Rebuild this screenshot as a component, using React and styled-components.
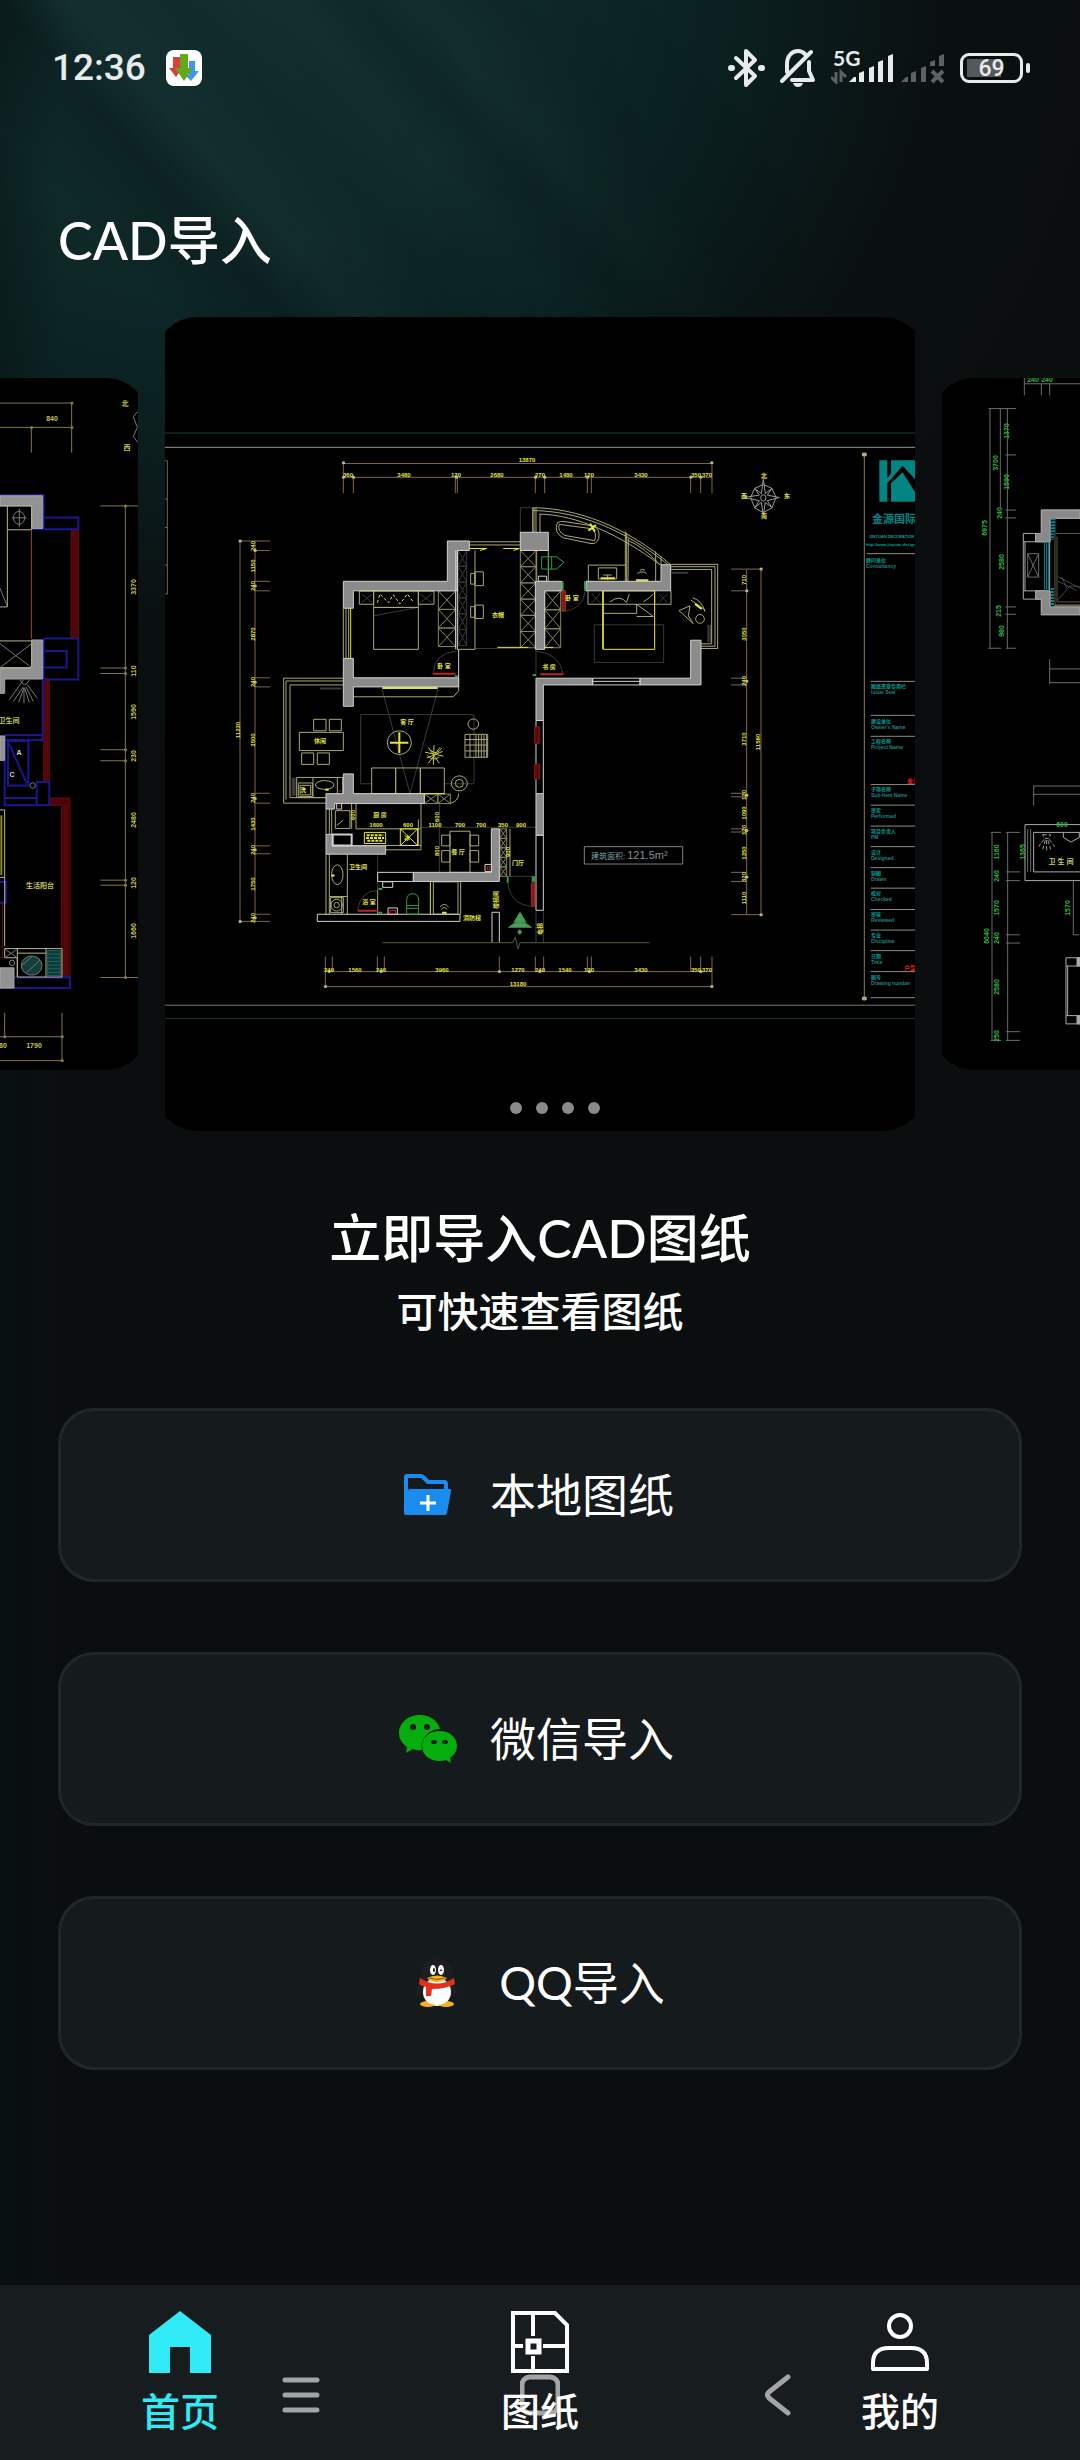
import React from "react";
import styled, { createGlobalStyle } from "styled-components";

const GlobalStyle = createGlobalStyle`
  *, *::before, *::after { box-sizing: border-box; }
  body {
    margin: 0;
    background: #0a0e0f;
    color: #fff;
    font-family: Lato, "Noto Sans CJK SC", sans-serif;
  }
`;

const Page = styled.div`
  position: relative;
  min-height: 100vh;
  display: flex;
  flex-direction: column;
  overflow: hidden;
  background:
    linear-gradient(90deg, rgba(6, 18, 18, 0.4) 0, rgba(6, 18, 18, 0) 60px),
    radial-gradient(ellipse 900px 820px at 220px -40px, #122e2f 0%, #0f2929 35%, #0b2121 55%, rgba(10, 16, 17, 0.6) 82%, rgba(10, 14, 15, 0) 100%),
    #0a0e0f;

  &::before {
    content: "";
    position: absolute;
    inset: 0 0 auto 0;
    height: 800px;
    background: linear-gradient(
      48deg,
      rgba(0, 0, 0, 0) 34%,
      rgba(0, 0, 0, 0.18) 40%,
      rgba(60, 90, 80, 0.08) 44%,
      rgba(0, 0, 0, 0.04) 50%,
      rgba(60, 100, 90, 0.05) 56%,
      rgba(0, 0, 0, 0.09) 60%,
      rgba(60, 90, 80, 0.07) 63%,
      rgba(0, 0, 0, 0.07) 68%,
      rgba(0, 0, 0, 0) 76%
    );
    mask-image: radial-gradient(ellipse 720px 640px at 160px 0, #000 40%, transparent 100%);
  }
`;

const StatusBar = styled.div`
  position: relative;
  display: flex;
  align-items: center;
  justify-content: space-between;
  height: 136px;
  padding: 0 50px 0 52px;
  color: #e8ebeb;
  font-family: Roboto, sans-serif;
`;

const StatusGroup = styled.div`
  display: flex;
  align-items: center;
  gap: ${(p) => p.$gap}px;
`;

const Clock = styled.time`
  font-size: 37px;
  font-weight: 500;
  line-height: 40px;
`;

const Signal = styled.div`
  position: relative;
  display: flex;
  align-items: center;
  gap: 8px;
`;

const NetworkType = styled.span`
  position: absolute;
  left: 2px;
  top: -4px;
  font: 700 21px/20px Lato, sans-serif;
`;

const BatteryShell = styled.div`
  display: flex;
  align-items: center;
  gap: 3px;

  &::after {
    content: "";
    width: 4px;
    height: 10px;
    border-radius: 2px;
    background: #e8ebeb;
  }
`;

const BatteryBody = styled.div`
  width: 63px;
  height: 30px;
  border: 3px solid #e8ebeb;
  border-radius: 9px;
  background: linear-gradient(#55595a, #55595a) 4px center / 34px 18px no-repeat;
  font: 500 23px/25px Roboto, sans-serif;
  text-align: center;
`;

const Header = styled.header`
  position: relative;
  padding: 72px 58px 45px;
`;

const Title = styled.h1`
  margin: 0;
  font-size: 52px;
  font-weight: 500;
  line-height: 64px;
`;

const Carousel = styled.section`
  position: relative;
  display: flex;
  align-items: center;
  justify-content: center;
  gap: 27px;
  overflow: hidden;
`;

const Slide = styled.div`
  position: relative;
  flex: 0 0 ${(p) => (p.$active ? 750 : 638)}px;
  overflow: hidden;
`;

const Sheet = styled.div`
  display: flex;
  justify-content: ${(p) => p.$align || "center"};
  margin: 0 -10px;
  padding: 0 10px;
  border-radius: 42px;
  background: #000;
  overflow: hidden;

  svg { display: block; }
`;

const Dots = styled.div`
  position: absolute;
  inset: auto 0 17px 30px;
  display: flex;
  justify-content: center;
  gap: 14px;
`;

const Dot = styled.span`
  width: 12px;
  height: 12px;
  border-radius: 50%;
  background: #8a8a8a;
`;

const Intro = styled.section`
  position: relative;
  padding: 77px 58px 68px;
  text-align: center;
`;

const IntroTitle = styled.h2`
  margin: 0 0 16px;
  font-size: 52px;
  font-weight: 500;
  line-height: 60px;
`;

const IntroText = styled.p`
  margin: 0;
  font-size: 41px;
  font-weight: 500;
  line-height: 56px;
`;

const Actions = styled.div`
  position: relative;
  display: flex;
  flex-direction: column;
  gap: 70px;
  padding: 0 58px 70px;
`;

const ActionButton = styled.button`
  display: flex;
  align-items: center;
  justify-content: center;
  gap: 40px;
  height: 174px;
  padding: 0;
  border: 3px solid #20272a;
  border-radius: 36px;
  background: #151a1d;
  color: #fff;
  font: 400 46px/60px Lato, "Noto Sans CJK SC", sans-serif;
`;

const ActionIcon = styled.span`
  display: flex;
  align-items: center;
  justify-content: center;
  width: 44px;
  height: 58px;

  svg { flex: none; display: block; }
`;

const BottomArea = styled.footer`
  position: relative;
  margin-top: auto;
`;

const TabBar = styled.nav`
  display: flex;
  background: #171c1f;
`;

const Tab = styled.a`
  flex: 1;
  display: flex;
  flex-direction: column;
  align-items: center;
  gap: 14px;
  padding: 26px 0 25px;
  color: ${(p) => (p.$active ? "#30eaf6" : "#fff")};
  font-size: 39px;
  font-weight: 500;
  line-height: 48px;
  text-decoration: none;

  svg { display: block; }
`;

const SystemBar = styled.div`
  position: absolute;
  inset: auto 0 0 0;
  display: flex;
  justify-content: center;
  gap: 199px;
  height: 86px;
  pointer-events: none;
`;

const SystemButton = styled.button`
  width: 40px;
  height: 42px;
  padding: 0;
  border: 0;
  background: none;
  color: rgba(255, 255, 255, 0.6);

  svg { display: block; }
`;

/* ---------- status icons ---------- */

const BluetoothIcon = () => (
  <svg width="37" height="40" viewBox="0 0 37 40" fill="none" stroke="#e8ebeb" strokeWidth="4" strokeLinejoin="round" strokeLinecap="round">
    <path d="M8 10L27 28L18 37V3L27 12L8 30" />
    <path d="M3 20h1M33 20h1" strokeWidth="6" />
  </svg>
);

const MutedBellIcon = () => (
  <svg width="36" height="40" viewBox="0 0 36 40" fill="none" stroke="#e8ebeb" strokeWidth="4" strokeLinecap="round" strokeLinejoin="round">
    <path d="M2 33L31 4" />
    <path d="M7 24V16C7 8 12 3 18 3C21 3 23 4 25 6" />
    <path d="M29 14V23L33 32H12" />
    <path d="M13 35H23C22 38 20 39 18 39S14 38 13 35Z" fill="#e8ebeb" stroke="none" />
  </svg>
);

const SignalIcon = () => (
  <svg width="62" height="32" viewBox="0 0 62 32">
    <g fill="#e8ebeb">
      <path d="M18 30L23 25H25V30Z" />
      <path d="M28 21L33 19V30H28Z M38 16L43 14V30H38Z M47 10L52 8V30H47Z M57 4L62 2V30H57Z" />
    </g>
    <path d="M5 20V30L0 25M10 30V20L15 25" fill="none" stroke="#5c6162" strokeWidth="3" />
  </svg>
);

const NoSimIcon = () => (
  <svg width="44" height="32" viewBox="0 0 44 32">
    <path d="M0 30L5 25H7V30Z M10 21L15 19V30H10Z M20 16L25 14V30H20Z M29 10L34 8V14H29Z M38 4L43 2V14H38Z" fill="#5c6162" />
    <path d="M31 19L42 30M42 19L31 30" stroke="#5c6162" strokeWidth="4" />
  </svg>
);

const DownloadAppIcon = () => (
  <svg width="36" height="36" viewBox="0 0 36 36">
    <rect width="36" height="36" rx="8" fill="#fff" />
    <path d="M7 7h7v10h3l-7 10l-7-9h4Z" fill="#d9403c" />
    <path d="M23 11h6v10h4l-8 10l-6-6h4Z" fill="#3a98ee" />
    <path d="M14 4h8v14h5l-9 13l-9-13h5Z" fill="#63a71a" />
  </svg>
);

/* ---------- action icons ---------- */

const FolderIcon = () => (
  <svg width="48" height="42" viewBox="0 0 48 42">
    <path d="M2 39V3Q2 2 3 2H17Q18 2 19 3L24 8H40Q42 8 42 10V16" fill="none" stroke="#1a8cf0" strokeWidth="4" strokeLinejoin="round" />
    <path d="M6 15H46Q48 15 47 17L43 39Q43 41 41 41H2Q0 41 0 39L4 17Q4 15 6 15Z" fill="#1a8cf0" />
    <path d="M16 29H32M24 21V37" stroke="#fff" strokeWidth="3" />
  </svg>
);

const WechatIcon = () => (
  <svg width="58" height="48" viewBox="0 0 58 48">
    <path d="M21 0C9 0 0 8 0 18C0 24 3 28 8 32L7 38L14 34Q18 36 23 35C21 25 29 14 41 14C39 6 31 0 21 0Z" fill="#06ad0c" />
    <path d="M41 16C31 16 23 22 23 31S31 46 41 46Q44 46 47 45L52 48L51 43C55 40 58 36 58 31C58 22 50 16 41 16Z" fill="#06ad0c" />
    <g fill="#151a1d">
      <ellipse cx="14" cy="12" rx="3" ry="3" />
      <ellipse cx="28" cy="12" rx="3" ry="3" />
      <ellipse cx="35" cy="27" rx="3" ry="2" />
      <ellipse cx="46" cy="27" rx="3" ry="2" />
    </g>
  </svg>
);

const QQIcon = () => (
  <svg width="42" height="50" viewBox="0 0 42 50">
    <path d="M21 1C11 1 5 7 5 16V21C2 27 0 33 1 38Q3 40 5 34L8 41H34L37 34Q39 40 41 38C42 33 40 27 37 21V16C37 7 31 1 21 1Z" fill="#1d1e20" />
    <ellipse cx="21" cy="34" rx="14" ry="14" fill="#fff" />
    <ellipse cx="12" cy="46" rx="8" ry="3" fill="#f8b31c" />
    <ellipse cx="30" cy="46" rx="8" ry="3" fill="#f8b31c" />
    <ellipse cx="21" cy="41" rx="11" ry="6" fill="#fff" />
    <path d="M4 20Q21 31 38 20L39 26Q30 31 16 31L15 38H10V29Q5 28 3 26Z" fill="#e3301c" />
    <ellipse cx="17" cy="12" rx="3" ry="5" fill="#fff" />
    <ellipse cx="25" cy="12" rx="3" ry="5" fill="#fff" />
    <ellipse cx="18" cy="12" rx="1" ry="2" fill="#111" />
    <path d="M24 13Q25 10 26 13" fill="none" stroke="#111" />
    <path d="M11 20Q21 15 31 20Q27 24 21 24T11 20Z" fill="#f8b31c" />
    <path d="M13 20Q21 23 29 20" fill="none" stroke="#8a4a10" strokeWidth="1" />
  </svg>
);

/* ---------- tab icons ---------- */

const HomeIcon = () => (
  <svg width="62" height="62" viewBox="0 0 62 62">
    <path d="M31 0L62 24V62H41V36H21V62H0V24Z" fill="currentColor" />
  </svg>
);

const DrawingIcon = () => (
  <svg width="62" height="62" viewBox="0 0 62 62" fill="none" stroke="currentColor" strokeWidth="4">
    <path d="M4 2H46L58 14V60H4Z" />
    <path d="M24 2V25M24 45V60M4 35H14M34 35H58" />
    <rect x="19" y="30" width="11" height="11" strokeWidth="5" />
  </svg>
);

const ProfileIcon = () => (
  <svg width="62" height="62" viewBox="0 0 62 62" fill="none" stroke="currentColor" strokeWidth="4">
    <circle cx="31" cy="15" r="11" />
    <path d="M4 58V52Q4 37 20 37H42Q58 37 58 52V58Z" strokeLinejoin="round" />
  </svg>
);

/* ---------- CAD drawings ---------- */

const CadGroup = styled.g`
  fill: none;
  stroke: ${(p) => p.$c};
  stroke-width: ${(p) => p.$w || 1}px;

  * { vector-effect: non-scaling-stroke; }
`;

const CadText = styled.text`
  font-family: "Liberation Sans", "Noto Sans CJK SC", sans-serif;
  font-size: ${(p) => p.$s || 6}px;
  font-weight: ${(p) => (p.$light ? 400 : 700)};
  fill: ${(p) => p.$c || "#e4e43c"};
  text-anchor: ${(p) => p.$a || "middle"};
`;

const Labels = ({ items, x0, y0, sy, color, size, anchor }) =>
  items.map(([x, y, text, turned], i) => {
    const px = Math.round(x0 + x / 3);
    const py = Math.round(y0 + y * sy);
    return (
      <CadText
        key={i}
        $c={color}
        $s={size}
        $a={anchor}
        x={px}
        y={py + 2}
        transform={turned ? `rotate(-90 ${px} ${py})` : undefined}
      >
        {text}
      </CadText>
    );
  });

const cross = (x, y, w, h) => `M${x} ${y}h${w}v${h}h${-w}ZM${x} ${y}l${w} ${h}M${x + w} ${y}l${-w} ${h}`;
const stack = (x, y, w, h, n) => Array.from({ length: n }, (_, i) => cross(x, y + i * h, w, h)).join("");
const box = (x, y, w, h) => `M${x} ${y}h${w}v${h}h${-w}Z`;
const vTicks = (xs, y1, y2) => xs.map((x) => `M${x} ${y1}V${y2}`).join("");
const hTicks = (ys, x1, x2) => ys.map((y) => `M${x1} ${y}H${x2}`).join("");

const planLabels = [
  [1102, 102, "13870"], [565, 140, "360"], [732, 140, "3480"], [889, 140, "120"], [1010, 140, "2680"],
  [1140, 140, "270"], [1218, 140, "1480"], [1288, 140, "120"], [1442, 140, "3430"], [1608, 140, "350"], [1641, 140, "370"],
  [506, 1390, "240"], [586, 1390, "1560"], [663, 1390, "240"], [846, 1390, "3960"], [1073, 1390, "1270"],
  [1140, 1390, "240"], [1216, 1390, "1540"], [1288, 1390, "120"], [1442, 1390, "3430"], [1608, 1390, "350"], [1641, 1390, "370"],
  [1075, 1427, "13180"],
  [278, 318, "240", 1], [278, 368, "1150", 1], [278, 420, "240", 1], [278, 542, "2870", 1], [278, 663, "240", 1],
  [278, 809, "3500", 1], [278, 957, "240", 1], [278, 1022, "1430", 1], [278, 1088, "240", 1], [278, 1174, "1750", 1], [278, 1259, "240", 1],
  [235, 785, "11230", 1],
  [1751, 405, "710", 1], [1751, 542, "3050", 1], [1751, 661, "240", 1], [1751, 808, "3710", 1], [1751, 949, "120", 1],
  [1751, 994, "1090", 1], [1751, 1038, "120", 1], [1751, 1094, "1350", 1], [1751, 1156, "320", 1], [1751, 1210, "1110", 1],
  [1793, 815, "11580", 1],
  [1015, 492, "衣帽"], [852, 622, "卧 室"], [742, 763, "客 厅"], [480, 813, "休闲"], [660, 1000, "厨 房"],
  [648, 1023, "1600"], [745, 1023, "600"], [825, 1023, "1100"], [900, 1023, "700"], [964, 1023, "700"], [1028, 1023, "350"], [1083, 1023, "900"],
  [895, 1092, "餐 厅"], [594, 1130, "卫生间"], [627, 1220, "浴 室"], [1075, 1120, "门厅"],
  [935, 1259, "消防梯"], [1235, 450, "卧 室"], [1166, 624, "书 房"], [1008, 1215, "楼梯间", 1], [1139, 1287, "电梯", 1],
  [832, 1090, "800", 1], [1043, 1092, "900", 1], [832, 1005, "600", 1], [580, 1000, "600", 1],
  [1813, 141, "北"], [1751, 193, "西"], [1880, 193, "东"], [1812, 244, "南"], [429, 936, "洗"], [742, 1056, "冰"],
];

const titleRows = [
  [673, "图纸签章专用栏", "Issue Seal"], [761, "建设单位", "Owner's Name"], [813, "工程名称", "Project Name"],
  [934, "子项名称", "Sub-Item Name"], [986, "审定", "Performed"], [1039, "项目负责人", "PM"], [1092, "设计", "Designed"],
  [1145, "制图", "Drawn"], [1197, "校对", "Checked"], [1250, "审核", "Reviewed"], [1303, "专业", "Discipline"],
  [1355, "日期", "Time"], [1408, "图号", "Drawing number"],
];

const FloorPlan = () => (
  <svg width="750" height="814" viewBox="165 317 750 814" role="img" aria-label="CAD floor plan">
    <g transform="translate(160 420) scale(0.33333 0.39541)">
      <CadGroup $c="#1d3a34"><path d="M15 33H2265M15 1514H2265" /></CadGroup>
      <CadGroup $c="#9a9a94"><path d="M15 69H2265" /></CadGroup>
      <CadGroup $c="#77776f"><path d="M15 1480H2265" /></CadGroup>
      <CadGroup $c="#6f6c5a"><path d="M22 103V440H15M15 103h7M15 200h7M15 272h7M15 367h7" /></CadGroup>
      <CadGroup $c="#80664c">
        <path d={"M550 110H1656M550 145H1656M550 105V185M1656 105V185" + vTicks([580, 886, 892, 1126, 1154, 1282, 1294, 1592, 1622], 140, 185)} />
        <path d={"M240 306V1268M285 306V1268" + hTicks([306, 1268], 240, 330) + hTicks([330, 408, 432, 652, 675, 944, 969, 1077, 1097, 1250], 285, 330)} />
        <path d={"M1760 377V1251M1803 377V1251" + hTicks([377, 1251], 1713, 1803) + hTicks([432, 653, 670, 944, 953, 1034, 1042, 1144, 1167], 1713, 1760)} />
        <path d={"M496 1395H1656M496 1433H1656M496 1357V1433M1656 1357V1433" + vTicks([517, 652, 673, 1018, 1126, 1151, 1282, 1294, 1592, 1622], 1357, 1395)} />
      </CadGroup>
      <CadGroup $c="#b8b48c" $w={3} strokeLinecap="round">
        <path d="M550 108h1M1655 108h1M240 306h1M240 1268h1M1803 377h1M1803 1251h1M496 1433h1M1655 1433h1M550 145h1M580 145h1M889 145h1M1126 145h1M1154 145h1M1282 145h1M1592 145h1M1622 145h1M285 330h1M285 420h1M285 663h1M285 957h1M285 1087h1M285 1259h1M1760 432h1M1760 661h1M1760 949h1M1760 1038h1M1760 1156h1M507 1395h1M663 1395h1M1018 1395h1M1139 1395h1M1288 1395h1M1622 1395h1" />
      </CadGroup>

      {/* faint furniture guides */}
      <CadGroup $c="#3a3a3a">
        <path d="M666 680L750 945L834 680M942 745H602V920H635M942 745V920H853" />
        <path d="M1303 518h208v95h-208ZM783 1030H1128M838 970V1144M653 1098V1190M1038 1154H1122M1081 330V222H1118M1128 580V650M1128 1240V1322M1150 1240V1322M945 578H1081" />
        <path d={stack(895, 330, 25, 40, 6)} />
        <path d="M820 640Q822 590 887 585M1210 645Q1200 590 1130 585M1206 485Q1270 480 1276 432M593 1240Q600 1190 655 1190M1043 1160Q1045 1225 1115 1230" />
        <path d="M643 495L775 474M605 440L637 462M637 440L605 462M780 440L816 462M816 440L780 462M1295 440L1320 462M1320 440L1295 462M1497 440L1522 462M1522 440L1497 462" />
        <path d="M398 905V950M404 905V950M480 679H545M1535 386H1585M1645 518V562M1652 518V562" strokeWidth="2" />
      </CadGroup>

      {/* joinery and glazing */}
      <CadGroup $c="#a9a972">
        <path d="M550 653H371V969H498M550 670H390V955H498M378 660V960M550 660H378" />
        <path d="M550 476V603M558 476V603M566 476V603M498 984V1048M508 984V1048M515 984V1048" />
        <path d="M928 308H1081M928 316H1081M945 330V580M892 580H945M1118 222V284M1128 222V284M1140 236V284" />
        <path d="M1118 222C1250 222 1400 270 1532 366M1118 229C1250 230 1390 274 1524 366M1140 238C1250 240 1380 290 1500 366M1122 222V284" />
        <path d="M1532 365H1673V578H1623M1532 378H1655V566H1623M1532 371H1665V572H1623" />
        <path d={box(641, 474, 134, 106) + box(641, 432, 134, 42) + box(598, 432, 43, 34) + box(775, 432, 47, 34)} />
        <path d={box(945, 384, 25, 35) + box(945, 468, 25, 34) + box(932, 388, 13, 27) + box(932, 472, 13, 27)} />
        <path d={box(418, 790, 132, 46) + box(461, 757, 37, 29) + box(508, 757, 36, 29) + box(425, 842, 36, 29) + box(472, 842, 36, 29)} />
        <path d={box(410, 904, 138, 51) + box(415, 918, 42, 34) + box(420, 924, 32, 24) + "M459 904V955M532 904V955"} />
        <ellipse cx="494" cy="923" rx="28" ry="11" />
        <ellipse cx="718" cy="816" rx="36" ry="30" />
        <ellipse cx="940" cy="769" rx="16" ry="13" />
        <ellipse cx="898" cy="919" rx="24" ry="19" />
        <ellipse cx="898" cy="919" rx="12" ry="10" />
        <path d={box(915, 795, 68, 58) + vTicks([930, 948, 956, 964, 972, 980], 795, 853) + hTicks([808, 822, 837], 915, 983)} />
        <path d={box(635, 880, 72, 65) + box(707, 880, 74, 65) + box(781, 880, 72, 65)} />
        <path d="M580 700H880L896 685V652M870 970Q895 965 896 945" />
        <path d={box(526, 988, 44, 45) + "M530 1025L550 1012M575 970V1034M588 970V1034H780M580 1076H783M783 970V1087H677M775 1010V1076"} />
        <path d={box(870, 1040, 60, 104) + box(845, 1050, 25, 27) + box(845, 1089, 25, 29) + box(930, 1050, 26, 27) + box(930, 1089, 26, 29)} />
        <path d={"M498 1098V1250M508 1098V1250M562 1098V1250M508 1205H562" + box(512, 1208, 38, 38)} />
        <ellipse cx="532" cy="1150" rx="17" ry="25" />
        <ellipse cx="530" cy="1227" rx="17" ry="15" />
        <ellipse cx="530" cy="1227" rx="8" ry="7" />
        <path d={box(820, 1168, 74, 82) + "M902 1168V1250M840 1232Q853 1218 866 1232M844 1238Q853 1228 862 1238M653 1190V1250M545 1205V1250M1050 1034V1154"} />
        <path d="M1192 260Q1200 255 1215 257L1300 268Q1322 275 1316 300Q1310 315 1290 312L1210 298Q1180 285 1192 260ZM1198 264L1296 275Q1312 285 1304 305L1215 292Q1190 280 1198 264Z" />
        <path d="M1285 408V367H1396M1400 285V408M1396 282V408M1405 300L1404 408M1405 305Q1450 320 1500 366M1487 332V408M1503 345V366" />
        <path d={box(1315, 374, 55, 28) + "M1330 392H1355M1343 392V405M1165 330V408M1130 330V408"} />
        <path d="M1557 482L1590 470L1585 495L1600 515ZM1592 455L1635 480M1598 450Q1625 455 1635 485M1440 380Q1447 375 1455 380M1432 388Q1446 380 1460 388M1284 432V466H1330M1484 432V466H1533V432" />
        <ellipse cx="1620" cy="503" rx="13" ry="11" />
        <path d="M1330 466H1484M1330 489H1430V466L1480 497H1430M1400 460L1408 440M1350 460Q1380 440 1400 462M1450 460Q1470 450 1480 440" />
      </CadGroup>
      <CadGroup $c="#85855c">
        <path d={stack(1081, 330, 47, 41, 6) + stack(835, 432, 52, 47, 3) + stack(1154, 432, 48, 48, 3) + stack(1020, 1034, 20, 24, 5) + cross(793, 946, 40, 24) + cross(834, 946, 37, 24)} />
      </CadGroup>

      {/* bright details */}
      <CadGroup $c="#e6e62e">
        <path d="M572 476V603M598 432H822M666 678H834M930 325H980L960 330M1030 325H1078L1060 330M1012 575H1105M1126 575H1180M811 1168V1250M635 945H853" />
        <path d="M690 816H745M718 790V842M668 678H832" strokeWidth="2" />
        <path d={box(1330, 432, 154, 148)} />
        <path d={box(613, 1043, 64, 28) + box(721, 1034, 52, 42) + "M721 1034L773 1076M773 1034L721 1076"} />
        <path d="M652 462L660 440L685 462L700 442L720 465L742 440L762 462" strokeDasharray="3 2" />
        <path d="M620 1050H670M618 1057H672M622 1064H668" strokeWidth="2" strokeDasharray="3 1" />
        <path d="M1428 405H1465M1290 262L1305 282M1308 266L1285 280M846 1246H860M496 935H506M514 1152H524M1322 400H1365M1605 465L1625 478" strokeWidth="2" />
        <path d="M1328 432V580" />
      </CadGroup>
      <CadGroup $c="#c4c44a">
        <path d="M795 840L850 850M805 828L838 868M822 822L820 872M840 828L805 868M800 855L848 838M812 835Q830 850 845 830M802 848Q820 865 838 852" />
      </CadGroup>

      {/* load-bearing walls */}
      <CadGroup $c="#d0d0d0">
        <g fill="#8b8b8b">
          <path d="M550 408H862V306H928V330H892V432H580V476H550Z" />
          <path d="M550 603H580V652H896V675H580V724H550Z" />
          <path d="M550 895H580V945H793V970H524V984H498V945H550Z" />
          <path d="M498 1048H518V1077H677V1098H498Z" />
          <path d="M760 1144H994V1034H1018V1167H760Z" />
          <path d="M1081 284H1165V330H1081Z" />
          <path d="M1126 408H1206V432H1154V580H1126Z" />
          <path d="M1278 408H1503V366H1532V432H1278Z" />
          <path d="M1592 557H1623V670H1440V653H1592Z" />
          <path d="M1128 653H1298V670H1150V760H1128Z" />
          <path d="M1128 945H1150V1050H1128Z" />
        </g>
        <path d="M653 1144H760V1167H653ZM472 1250H900V1268H472ZM1298 653H1440V670H1298ZM1298 661H1440M1128 760V945M1150 760V945M1128 1050H1150V1240H1128ZM996 1245V1322M1018 1245V1322M996 1245H1018M887 330V580M892 330V580M896 580V652" />
        <path d={box(518, 1048, 57, 28)} strokeWidth="2" />
        <path d={box(668, 1168, 30, 14) + box(684, 1234, 28, 16) + box(530, 970, 15, 14) + box(975, 1124, 20, 18) + box(1135, 395, 25, 13)} />
      </CadGroup>

      <CadGroup $c="#b82424">
        <path d="M818 642H887M1140 643H1210M593 1241H655" strokeWidth="2" />
        <path d={box(690, 1240, 16, 8) + box(982, 1130, 8, 8) + "M535 976h6M536 938h8"} />
        <path d={box(1206, 432, 10, 50) + box(1115, 1170, 9, 60)} fill="#7d1a1a" />
      </CadGroup>
      <CadGroup $c="#8a1414">
        <path d={box(1124, 776, 14, 42) + box(1124, 870, 14, 38)} fill="#5c0a0a" />
      </CadGroup>
      <CadGroup $c="#2f9a4a">
        <path d="M740 1250V1215Q740 1198 758 1198T776 1215V1250ZM740 1228H776M740 1235H776M1145 346H1190L1212 360L1190 377H1145ZM1175 346V377M1165 346V377" />
        <path d="M1208 408V432M1275 408V432M1118 1154v14M1124 1154v14M1043 1154v16M655 1186h12M655 1246h12M884 648h10M1118 645h10" strokeWidth="2" />
        <path d="M1080 1245L1098 1270H1062ZM1045 1284Q1060 1270 1080 1270T1115 1284" fill="#4f9c5c" />
        <circle cx="1079" cy="1295" r="5" fill="#4f9c5c" />
      </CadGroup>
      <CadGroup $c="#49613f"><path d="M667 1322H1058L1066 1308L1074 1338L1080 1322H1468" /></CadGroup>

      {/* compass */}
      <CadGroup $c="#9a9a9a">
        <path d="M1810 163L1836 173L1848 196L1836 222L1810 234L1784 222L1772 196L1784 173Z" />
        <path d="M1810 150L1816 186L1836 173L1822 190L1858 196L1822 204L1836 222L1816 208L1810 240L1804 208L1784 222L1798 204L1750 196L1798 190L1784 173L1804 186Z" />
        <ellipse cx="1810" cy="197" rx="8" ry="8" />
      </CadGroup>

      {/* title block */}
      <CadGroup $c="#857f5e"><path d="M2113 87V1463" /></CadGroup>
      <CadGroup $c="#b0aa78"><path d="M2111 87h4M2111 1463h4" strokeWidth="4" strokeLinecap="round" /></CadGroup>
      <CadGroup $c="#8b8b84"><path d={"M2120 338H2265" + hTicks([661, 747, 800, 922, 974, 1027, 1079, 1132, 1184, 1238, 1290, 1342, 1395, 1461], 2132, 2265)} /></CadGroup>
      <path d="M2158 102H2182V147L2193 135V102H2265V150L2228 116L2182 160V207H2158ZM2193 207V160L2228 132L2265 182V207Z" fill="#008583" />
      <CadGroup $c="#7b7f80"><path d={box(1273, 1079, 295, 44)} /></CadGroup>
    </g>

    <Labels items={planLabels} x0={160} y0={420} sy={0.39541} size={6} />
    <Labels items={titleRows.map(([y, zh]) => [2132, y, zh])} x0={160} y0={420} sy={0.39541} size={5} color="#00a09c" anchor="start" />
    <Labels items={titleRows.map(([y, , en]) => [2132, y + 15, en])} x0={160} y0={420} sy={0.39541} size={5} color="#1a8780" anchor="start" />
    <CadText x="872" y="523" $s={11} $c="#008583" $a="start">金源国际装饰</CadText>
    <CadText x="869" y="538" $s={4} $c="#00a09c" $a="start">JINYUAN DECORATION ENGINEERING</CadText>
    <CadText x="866" y="546" $s={4} $c="#00a09c" $a="start">http://www.jinyuan-design.com</CadText>
    <CadText x="866" y="562" $s={5} $c="#00a09c" $a="start">顾问单位</CadText>
    <CadText x="866" y="568" $s={5} $c="#1a8780" $a="start">Consultancy</CadText>
    <CadText x="907" y="783" $s={6} $c="#e01818" $a="start">金源花园</CadText>
    <CadText x="904" y="970" $s={6} $c="#e01818" $a="start">户型平面</CadText>
    <CadText x="591" y="859" $s={8} $c="#7fa3a3" $a="start" $light>
      建筑面积:<tspan dx="2" fontSize="11" fill="#8a8f90" style={{ fontSize: 11 }}>121.5m²</tspan>
    </CadText>
  </svg>
);

const leftLabels = [
  [155, 106, "840"], [375, 74, "北"], [380, 169, "西"], [402, 472, "3370", 1], [402, 655, "110", 1], [402, 744, "1590", 1],
  [402, 840, "230", 1], [402, 981, "2480", 1], [402, 1117, "120", 1], [402, 1222, "1660", 1], [28, 764, "卫生间"],
  [120, 1124, "生活阳台"], [101, 1472, "1790"], [8, 1472, "80"],
];

const LeftPlan = () => (
  <svg width="138" height="692" viewBox="0 378 138 692" role="img" aria-label="CAD balcony plan">
    <g transform="translate(0 370) scale(0.33333 0.45918)">
      <CadGroup $c="#807848">
        <path d={"M0 72H215M0 125H215M215 70V180M94 125V180M376 296V1323M0 1452H186M0 1504H186M14 1400V1452M186 1400V1504" + hTicks([296, 649, 661, 827, 851, 1111, 1122, 1323], 301, 376) + "M376 296H414M376 1323H414"} />
        <path d="M215 72h1M215 125h1M94 125h1M376 296h1M376 649h1M376 661h1M376 827h1M376 851h1M376 1111h1M376 1122h1M376 1323h1M14 1452h1M186 1452h1M186 1504h1" strokeWidth="3" strokeLinecap="round" />
      </CadGroup>
      <CadGroup $c="#640a0c" $w={1}>
        <path d={box(213, 347, 22, 238) + box(131, 675, 17, 222) + "M148 932H210V1323H185V948H148Z"} fill="#4a0608" />
        <path d="M220 347V585M228 347V585M136 675V897M143 675V897M193 948V1323M200 948V1323M0 1160H8V1280H0" />
      </CadGroup>
      <CadGroup $c="#1a1690" $w={2}>
        <path d="M131 321H235V347H131M131 585H235V674H131M131 612H200V648H131M14 795H131M14 806H128V675M14 795V948H148V897H110V945M14 932H110M24 808H85V905H24ZM28 815L80 900M131 585V674M0 1115H18V1160H0M43 1323H210V1346H0M0 272H131V347H96" />
      </CadGroup>
      <CadGroup $c="#a8a8a8">
        <g fill="#929292">
          <path d="M0 274H128V345H95V296H0Z" />
          <path d="M95 588H128V673H14V704H0V650H95Z" />
          <path d="M0 797H14V850H0ZM0 1302H42V1346H0Z" />
        </g>
      </CadGroup>
      <CadGroup $c="#b5b592">
        <path d="M0 296H95V348H22V516H0M22 296V348M0 590H95V648H0M14 958V1255M0 958H14M0 1105H14M14 1260H186V1322H52V1280H14ZM52 1260V1322M138 1260V1322M52 1270H138" />
      </CadGroup>
      <CadGroup $c="#8a8a20"><path d="M4 970V1100" strokeWidth="2" /></CadGroup>
      <CadGroup $c="#777">
        <path d="M0 596L95 648M95 596L0 648M0 475L22 515M35 322H80M58 302V342M16 1262L50 1279M50 1262L16 1279M70 675L28 718M70 690L40 722M72 692L56 724M72 692L72 726M74 692L88 724M78 690L100 722M82 685L112 715M60 675Q74 695 88 675" />
        <ellipse cx="57" cy="322" rx="17" ry="14" />
        <ellipse cx="98" cy="905" rx="8" ry="6" />
        <ellipse cx="36" cy="1291" rx="8" ry="6" />
        <ellipse cx="95" cy="1297" rx="31" ry="21" fill="#123f3c" />
        <path d="M414 90L400 102L412 125L400 145L414 158M65 1297L95 1278M80 1312L120 1285" />
      </CadGroup>
      <CadGroup $c="#9a4a42"><path d="M94 348V585" /></CadGroup>
      <CadGroup $c="#1e6762"><path d={box(143, 1264, 38, 55) + hTicks([1272, 1280, 1288, 1296, 1304, 1312], 143, 181)} fill="#0d3a38" /></CadGroup>
    </g>
    <Labels items={leftLabels} x0={0} y0={370} sy={0.45918} size={7} color="#c4c458" />
    <CadText x="19" y="755" $s={7} $c="#d8d8c0">A</CadText>
    <CadText x="12" y="777" $s={7} $c="#d8d8c0">C</CadText>
  </svg>
);

const rightLabels = [
  [340, 22, "240"], [382, 22, "240"], [261, 133, "1370", 1], [227, 202, "3700", 1], [261, 243, "1590", 1], [241, 311, "240", 1],
  [196, 345, "6975", 1], [245, 419, "2580", 1], [237, 524, "215", 1], [245, 569, "980", 1], [232, 1050, "1160", 1],
  [232, 1103, "240", 1], [232, 1171, "1570", 1], [200, 1233, "6040", 1], [232, 1238, "240", 1], [232, 1344, "2580", 1],
  [232, 1450, "250", 1], [309, 1050, "1365", 1], [445, 1171, "1570", 1], [425, 991, "600"],
];

const RightPlan = () => (
  <svg width="138" height="692" viewBox="942 378 138 692" role="img" aria-label="CAD bathroom plan">
    <g transform="translate(920 370) scale(0.33333 0.45918)">
      <CadGroup $c="#6b6b6b">
        <path d={"M315 30H480M313 17V55M364 30V55M389 30V55M210 84V606M241 84V300M262 84V606M205 84H288M205 606H243M258 606H288" + hTicks([185, 305, 322, 516, 532], 256, 288)} />
        <path d="M389 630V684M389 651H480M389 681H480M341 905V948M341 906H480M341 924H480" />
        <path d={"M216 1007V1460M263 1007V1460M212 1007H243M212 1460H243M460 1112V1230H478" + hTicks([1007, 1093, 1112, 1230, 1248, 1441, 1460], 258, 300)} />
        <path d={cross(323, 400, 33, 51) + "M323 1000V1093M332 1000V1093"} />
      </CadGroup>
      <CadGroup $c="#a8a8a8">
        <path d="M310 356H364V305H480V323H390V374H347V356M310 356V499H364V533H480V516H390V481H347V499M310 374H390M310 481H390M347 356V374M347 481V499M389 323V516M315 374V481" />
        <path d="M364 305H480V323H390V374H347V356H364ZM347 481H390V516H480V533H364V499H347Z" fill="#898989" />
        <path d="M480 990H315V1112H480M480 1007H341V1093H480M480 1280H438V1424H480M480 1298H438M480 1406H438M443 1298V1406M430 1007V1018L453 1028L478 1018V1007" />
        <path d={box(471, 1280, 9, 18) + box(471, 1406, 9, 18)} fill="#a8a8a8" />
      </CadGroup>
      <CadGroup $c="#17828a">
        <path d="M374 374V481M380 374V481M385 374V481" />
        <path d="M397 323V370M397 475V516M402 323V356" strokeWidth="3" strokeDasharray="2 1" />
      </CadGroup>
      <CadGroup $c="#5e5a3c"><path d="M405 356H480M405 356V514M411 363V505H480" /></CadGroup>
      <CadGroup $c="#a8a070"><path d="M405 512H480" /></CadGroup>
      <CadGroup $c="#454545"><path d="M414 450L480 475M414 460L470 480M411 503L450 470L480 472M425 450L440 475" /></CadGroup>
      <CadGroup $c="#999"><path d="M368 1012H392L386 1020H374ZM372 1022L356 1038M376 1024L368 1044M380 1024V1046M384 1024L392 1044M388 1022L404 1038" strokeDasharray="4 2" /></CadGroup>
    </g>
    <Labels items={rightLabels} x0={920} y0={370} sy={0.45918} size={7} color="#35b545" />
    <CadText x="1061" y="864" $s={7} $c="#c9c977">卫 生 间</CadText>
  </svg>
);

/* ---------- screen ---------- */

const actions = [
  { label: "本地图纸", icon: <FolderIcon /> },
  { label: "微信导入", icon: <WechatIcon /> },
  { label: "QQ导入", icon: <QQIcon /> },
];

const tabs = [
  { label: "首页", icon: <HomeIcon />, active: true },
  { label: "图纸", icon: <DrawingIcon /> },
  { label: "我的", icon: <ProfileIcon /> },
];

export default function App() {
  return (
    <>
      <GlobalStyle />
      <Page>
        <StatusBar>
          <StatusGroup $gap={20}>
            <Clock>12:36</Clock>
            <DownloadAppIcon />
          </StatusGroup>
          <StatusGroup $gap={15}>
            <BluetoothIcon />
            <MutedBellIcon />
            <Signal>
              <NetworkType>5G</NetworkType>
              <SignalIcon />
              <NoSimIcon />
            </Signal>
            <BatteryShell>
              <BatteryBody>69</BatteryBody>
            </BatteryShell>
          </StatusGroup>
        </StatusBar>

        <Header>
          <Title>CAD导入</Title>
        </Header>

        <Carousel>
          <Slide>
            <Sheet $align="flex-end"><LeftPlan /></Sheet>
          </Slide>
          <Slide $active>
            <Sheet><FloorPlan /></Sheet>
            <Dots>
              <Dot /><Dot /><Dot /><Dot />
            </Dots>
          </Slide>
          <Slide>
            <Sheet $align="flex-start"><RightPlan /></Sheet>
          </Slide>
        </Carousel>

        <Intro>
          <IntroTitle>立即导入CAD图纸</IntroTitle>
          <IntroText>可快速查看图纸</IntroText>
        </Intro>

        <Actions>
          {actions.map((a) => (
            <ActionButton key={a.label} type="button">
              <ActionIcon>{a.icon}</ActionIcon>
              {a.label}
            </ActionButton>
          ))}
        </Actions>

        <BottomArea>
          <TabBar>
            {tabs.map((t) => (
              <Tab key={t.label} href="#" $active={t.active}>
                {t.icon}
                {t.label}
              </Tab>
            ))}
          </TabBar>
          <SystemBar>
            <SystemButton type="button" aria-label="Recent apps">
              <svg width="40" height="42" viewBox="0 0 40 42" fill="none" stroke="currentColor" strokeWidth="5" strokeLinecap="round">
                <path d="M4 6H36M4 21H36M4 36H36" />
              </svg>
            </SystemButton>
            <SystemButton type="button" aria-label="Home screen">
              <svg width="40" height="42" viewBox="0 0 40 42" fill="none" stroke="currentColor" strokeWidth="5">
                <rect x="2" y="3" width="36" height="36" rx="8" />
              </svg>
            </SystemButton>
            <SystemButton type="button" aria-label="Back">
              <svg width="40" height="42" viewBox="0 0 40 42" fill="none" stroke="currentColor" strokeWidth="5" strokeLinecap="round" strokeLinejoin="round">
                <path d="M29 3L10 18Q7 21 10 24L29 39" />
              </svg>
            </SystemButton>
          </SystemBar>
        </BottomArea>
      </Page>
    </>
  );
}
